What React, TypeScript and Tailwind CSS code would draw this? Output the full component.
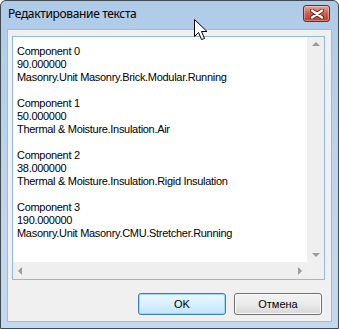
import React from "react";

const lines = [
  "Component 0",
  "90.000000",
  "Masonry.Unit Masonry.Brick.Modular.Running",
  "",
  "Component 1",
  "50.000000",
  "Thermal & Moisture.Insulation.Air",
  "",
  "Component 2",
  "38.000000",
  "Thermal & Moisture.Insulation.Rigid Insulation",
  "",
  "Component 3",
  "190.000000",
  "Masonry.Unit Masonry.CMU.Stretcher.Running",
];

function Tri({ dir }: { dir: "up" | "down" | "left" | "right" }) {
  const pts: Record<string, string> = {
    up: "0,4 4,0 8,4",
    down: "0,0 8,0 4,4",
    left: "4,0 4,8 0,4",
    right: "0,0 4,4 0,8",
  };
  const wh = dir === "up" || dir === "down" ? { w: 8, h: 4 } : { w: 4, h: 8 };
  return (
    <svg width={wh.w} height={wh.h} viewBox={`0 0 ${wh.w} ${wh.h}`}>
      <polygon points={pts[dir]} fill="#9a9a9a" />
    </svg>
  );
}

export default function App() {
  return (
    <div className="relative w-[339px] h-[329px] bg-white overflow-hidden">
      <div className="w-full h-full rounded-t-[6px] border border-[#404850] bg-gradient-to-b from-[#aecbe8] via-[#bcd4ec] to-[#c4d9ef] flex flex-col">
        {/* Title bar */}
        <div className="h-[28px] flex items-start justify-between pl-[7px] pr-[7px]">
          <div
            className="mt-[5px] text-[12px] leading-[16px] tracking-[-0.35px] text-black"
            style={{ fontFamily: '"Noto Sans", "Open Sans", sans-serif' }}
          >
            Редактирование текста
          </div>
          <div className="mt-[4px] mr-[1px] w-[27px] h-[17px] rounded-[3px] border border-[#6b2a22] bg-gradient-to-b from-[#e7a596] via-[#cf5f4e] to-[#c03a26] flex items-center justify-center shadow-[inset_0_0_0_1px_rgba(255,255,255,0.35)]">
            <svg width="14" height="10" viewBox="0 0 14 10">
              <path d="M2 1.5 L12 8.5 M12 1.5 L2 8.5" stroke="#5a1f18" strokeWidth="4" strokeLinecap="round" />
              <path d="M2 1.5 L12 8.5 M12 1.5 L2 8.5" stroke="#ffffff" strokeWidth="2.4" strokeLinecap="round" />
            </svg>
          </div>
        </div>
        {/* Client */}
        <div className="flex-1 mx-[6px] mb-[6px] border border-[#9cbde0] bg-[#f0f0f0] flex flex-col">
          <div className="mt-[6px] ml-[4px] mr-[6px] h-[244px] border border-[#93b8dd] bg-white flex flex-col">
            <div className="flex flex-1 min-h-0">
              <div
                className="flex-1 pt-[8px] pl-[4px] text-[11px] leading-[13px] tracking-[-0.3px] text-black whitespace-pre overflow-hidden"
                style={{ fontFamily: '"Liberation Sans", Arial, sans-serif' }}
              >
                {lines.map((l, i) => (
                  <div key={i} className="h-[13px]">
                    {l}
                  </div>
                ))}
              </div>
              <div className="w-[17px] bg-[#efefef] flex flex-col justify-between items-center py-[5px]">
                <Tri dir="up" />
                <Tri dir="down" />
              </div>
            </div>
            <div className="h-[17px] flex">
              <div className="flex-1 bg-[#efefef] flex items-center justify-between px-[5px]">
                <Tri dir="left" />
                <Tri dir="right" />
              </div>
              <div className="w-[17px] bg-[#f0f0f0]" />
            </div>
          </div>
          <div className="flex justify-end gap-[8px] mt-[13px] mr-[9px]">
            <button
              className="w-[88px] h-[22px] rounded-[3px] border border-[#3c7fb1] bg-gradient-to-b from-[#eaf6fd] via-[#d9f0fc] to-[#bee6fd] shadow-[inset_0_0_0_1px_#9cd8f8] text-[11px] text-black"
              style={{ fontFamily: '"Liberation Sans", Arial, sans-serif' }}
            >
              OK
            </button>
            <button
              className="w-[88px] h-[22px] rounded-[3px] border border-[#707070] bg-gradient-to-b from-[#f2f2f2] via-[#ebebeb] to-[#d6d6d6] shadow-[inset_0_0_0_1px_#fcfcfc] text-[11px] text-black"
              style={{ fontFamily: '"Liberation Sans", Arial, sans-serif' }}
            >
              Отмена
            </button>
          </div>
        </div>
      </div>
      {/* mouse cursor */}
      <svg className="absolute left-[194px] top-[19px]" width="15" height="23" viewBox="0 0 15 23">
        <path d="M0.5 0.5 L0.5 17.5 L4.5 13.5 L7.5 20.5 L10.5 19.5 L7.5 12.5 L13 12.5 Z" fill="#ffffff" stroke="#000000" strokeWidth="1" />
      </svg>
    </div>
  );
}
